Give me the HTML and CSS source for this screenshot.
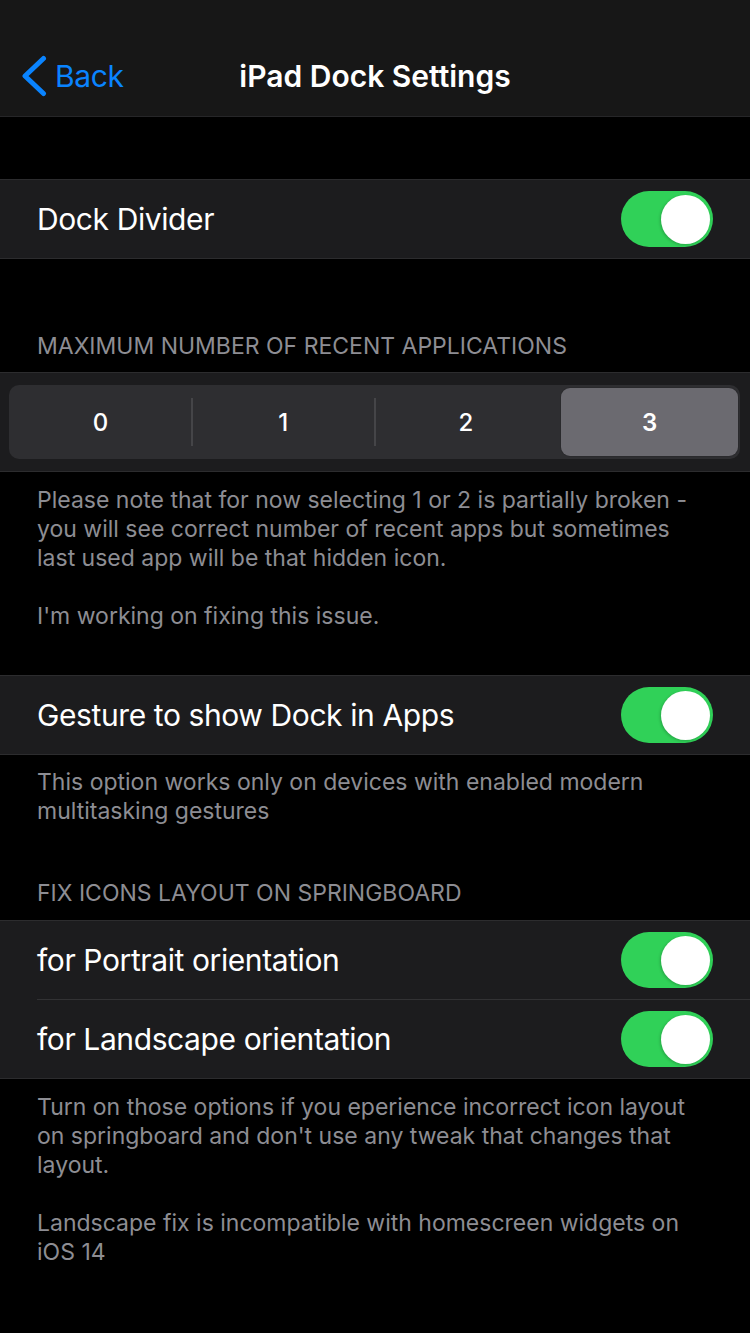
FILE: index.html
```html
<!DOCTYPE html>
<html lang="en">
<head>
<meta charset="utf-8">
<title>iPad Dock Settings</title>
<link rel="stylesheet" href="styles.css">
</head>
<body>
<div class="screen">
  <header class="nav">
    <div class="nav-row">
      <a class="back" href="#">
        <svg class="chevron" width="26" height="42" viewBox="0 0 26 42" aria-hidden="true">
          <polyline points="22.5,3.5 4,21 22.5,38.5" fill="none" stroke="#0a84ff" stroke-width="5" stroke-linecap="round" stroke-linejoin="round"/>
        </svg>
        <span class="back-label">Back</span>
      </a>
      <h1 class="title">iPad Dock Settings</h1>
      <div class="nav-spacer"></div>
    </div>
  </header>

  <div class="top-gap"></div>

  <section class="group">
    <div class="row">
      <span class="row-label">Dock Divider</span>
      <span class="toggle on"><span class="thumb"></span></span>
    </div>
  </section>

  <div class="section-header first">MAXIMUM NUMBER OF RECENT APPLICATIONS</div>
  <section class="group seg-cell">
    <div class="segmented">
      <div class="segment">0</div>
      <div class="segment sep">1</div>
      <div class="segment sep">2</div>
      <div class="segment selected"><span class="pill">3</span></div>
    </div>
  </section>
  <div class="footer">
    <p>Please note that for now selecting 1 or 2 is partially broken - you will see correct number of recent apps but sometimes last used app will be that hidden icon.</p>
    <p>I'm working on fixing this issue.</p>
  </div>

  <section class="group g2">
    <div class="row">
      <span class="row-label">Gesture to show Dock in Apps</span>
      <span class="toggle on"><span class="thumb"></span></span>
    </div>
  </section>
  <div class="footer tight">
    <p>This option works only on devices with enabled modern multitasking gestures</p>
  </div>

  <div class="section-header second">FIX ICONS LAYOUT ON SPRINGBOARD</div>
  <section class="group">
    <div class="row">
      <span class="row-label">for Portrait orientation</span>
      <span class="toggle on"><span class="thumb"></span></span>
    </div>
    <div class="row divided">
      <span class="row-label">for Landscape orientation</span>
      <span class="toggle on"><span class="thumb"></span></span>
    </div>
  </section>
  <div class="footer">
    <p>Turn on those options if you eperience incorrect icon layout on springboard and don't use any tweak that changes that layout.</p>
    <p>Landscape fix is incompatible with homescreen widgets on iOS 14</p>
  </div>
</div>
</body>
</html>
```

FILE: styles.css
```css
* { box-sizing: border-box; }

html, body {
  margin: 0;
  padding: 0;
  background: #000;
}

body {
  font-family: Inter, Roboto, "Liberation Sans", sans-serif;
  color: #fff;
  width: 750px;
  height: 1333px;
  overflow: hidden;
}

.screen {
  display: flex;
  flex-direction: column;
}

/* Navigation bar */
.nav {
  height: 117px;
  background: #171717;
  border-bottom: 1px solid #262628;
  padding-top: 36px;
}

.nav-row {
  height: 80px;
  display: grid;
  grid-template-columns: 1fr auto 1fr;
  align-items: center;
}

.back {
  display: flex;
  align-items: center;
  text-decoration: none;
  color: #0a84ff;
  padding-left: 21px;
  gap: 8px;
}

.chevron { display: block; }

.back-label {
  font-size: 30px;
  letter-spacing: -0.4px;
}

.title {
  margin: 0;
  font-size: 30px;
  font-weight: 600;
  letter-spacing: 0;
  color: #fff;
}

.top-gap { height: 62px; }

/* Groups / rows */
.group {
  background: #1c1c1e;
  border-top: 1px solid #2c2c2e;
  border-bottom: 1px solid #2c2c2e;
}

.row {
  height: 78px;
  display: flex;
  align-items: center;
  justify-content: space-between;
  padding: 0 37px;
}

.row.divided {
  height: 79px;
  border-top: 1px solid #323234;
  margin-left: 37px;
  padding-left: 0;
}

.row-label {
  font-size: 30px;
  letter-spacing: -0.4px;
}

/* Toggle */
.toggle {
  width: 92px;
  height: 56px;
  border-radius: 28px;
  background: #30d158;
  display: flex;
  align-items: center;
  justify-content: flex-end;
  padding: 0 3px;
  flex: none;
}

.thumb {
  width: 49px;
  height: 49px;
  border-radius: 50%;
  background: #fff;
  box-shadow: -1px 1px 3px rgba(0, 0, 0, 0.2);
}

/* Section headers and footers */
.section-header {
  font-size: 23px;
  line-height: 29px;
  color: #8d8d93;
  padding: 0 37px;
  letter-spacing: 0;
}

.section-header.first { padding-top: 73px; padding-bottom: 11px; }
.section-header.second { padding-top: 53px; padding-bottom: 12px; }

.footer {
  font-size: 23px;
  line-height: 29px;
  color: #8d8d93;
  padding: 14px 37px 0;
  letter-spacing: 0;
}

.footer.tight { padding-top: 13px; }

.footer p { margin: 0; }
.footer p + p { margin-top: 29px; }

.g2 { margin-top: 44px; }

/* Segmented control */
.seg-cell {
  padding: 12px 10px 12px 9px;
}

.segmented {
  height: 74px;
  border-radius: 10px;
  background: #2e2e31;
  display: grid;
  grid-template-columns: repeat(4, 1fr);
}

.segment {
  position: relative;
  display: flex;
  align-items: center;
  justify-content: center;
  font-size: 24px;
  font-weight: 500;
  color: #fff;
}

.segment.sep::before {
  content: "";
  position: absolute;
  left: -1px;
  top: 13px;
  bottom: 13px;
  width: 2px;
  background: #454548;
}

.segment.selected {
  padding: 3px 2px 3px 4px;
  align-items: stretch;
  justify-content: stretch;
}

.pill {
  flex: 1;
  display: flex;
  align-items: center;
  justify-content: center;
  border-radius: 9px;
  background: #6b6a70;
  font-weight: 600;
  box-shadow: 0 0 0 1px rgba(0,0,0,0.08);
}
```
